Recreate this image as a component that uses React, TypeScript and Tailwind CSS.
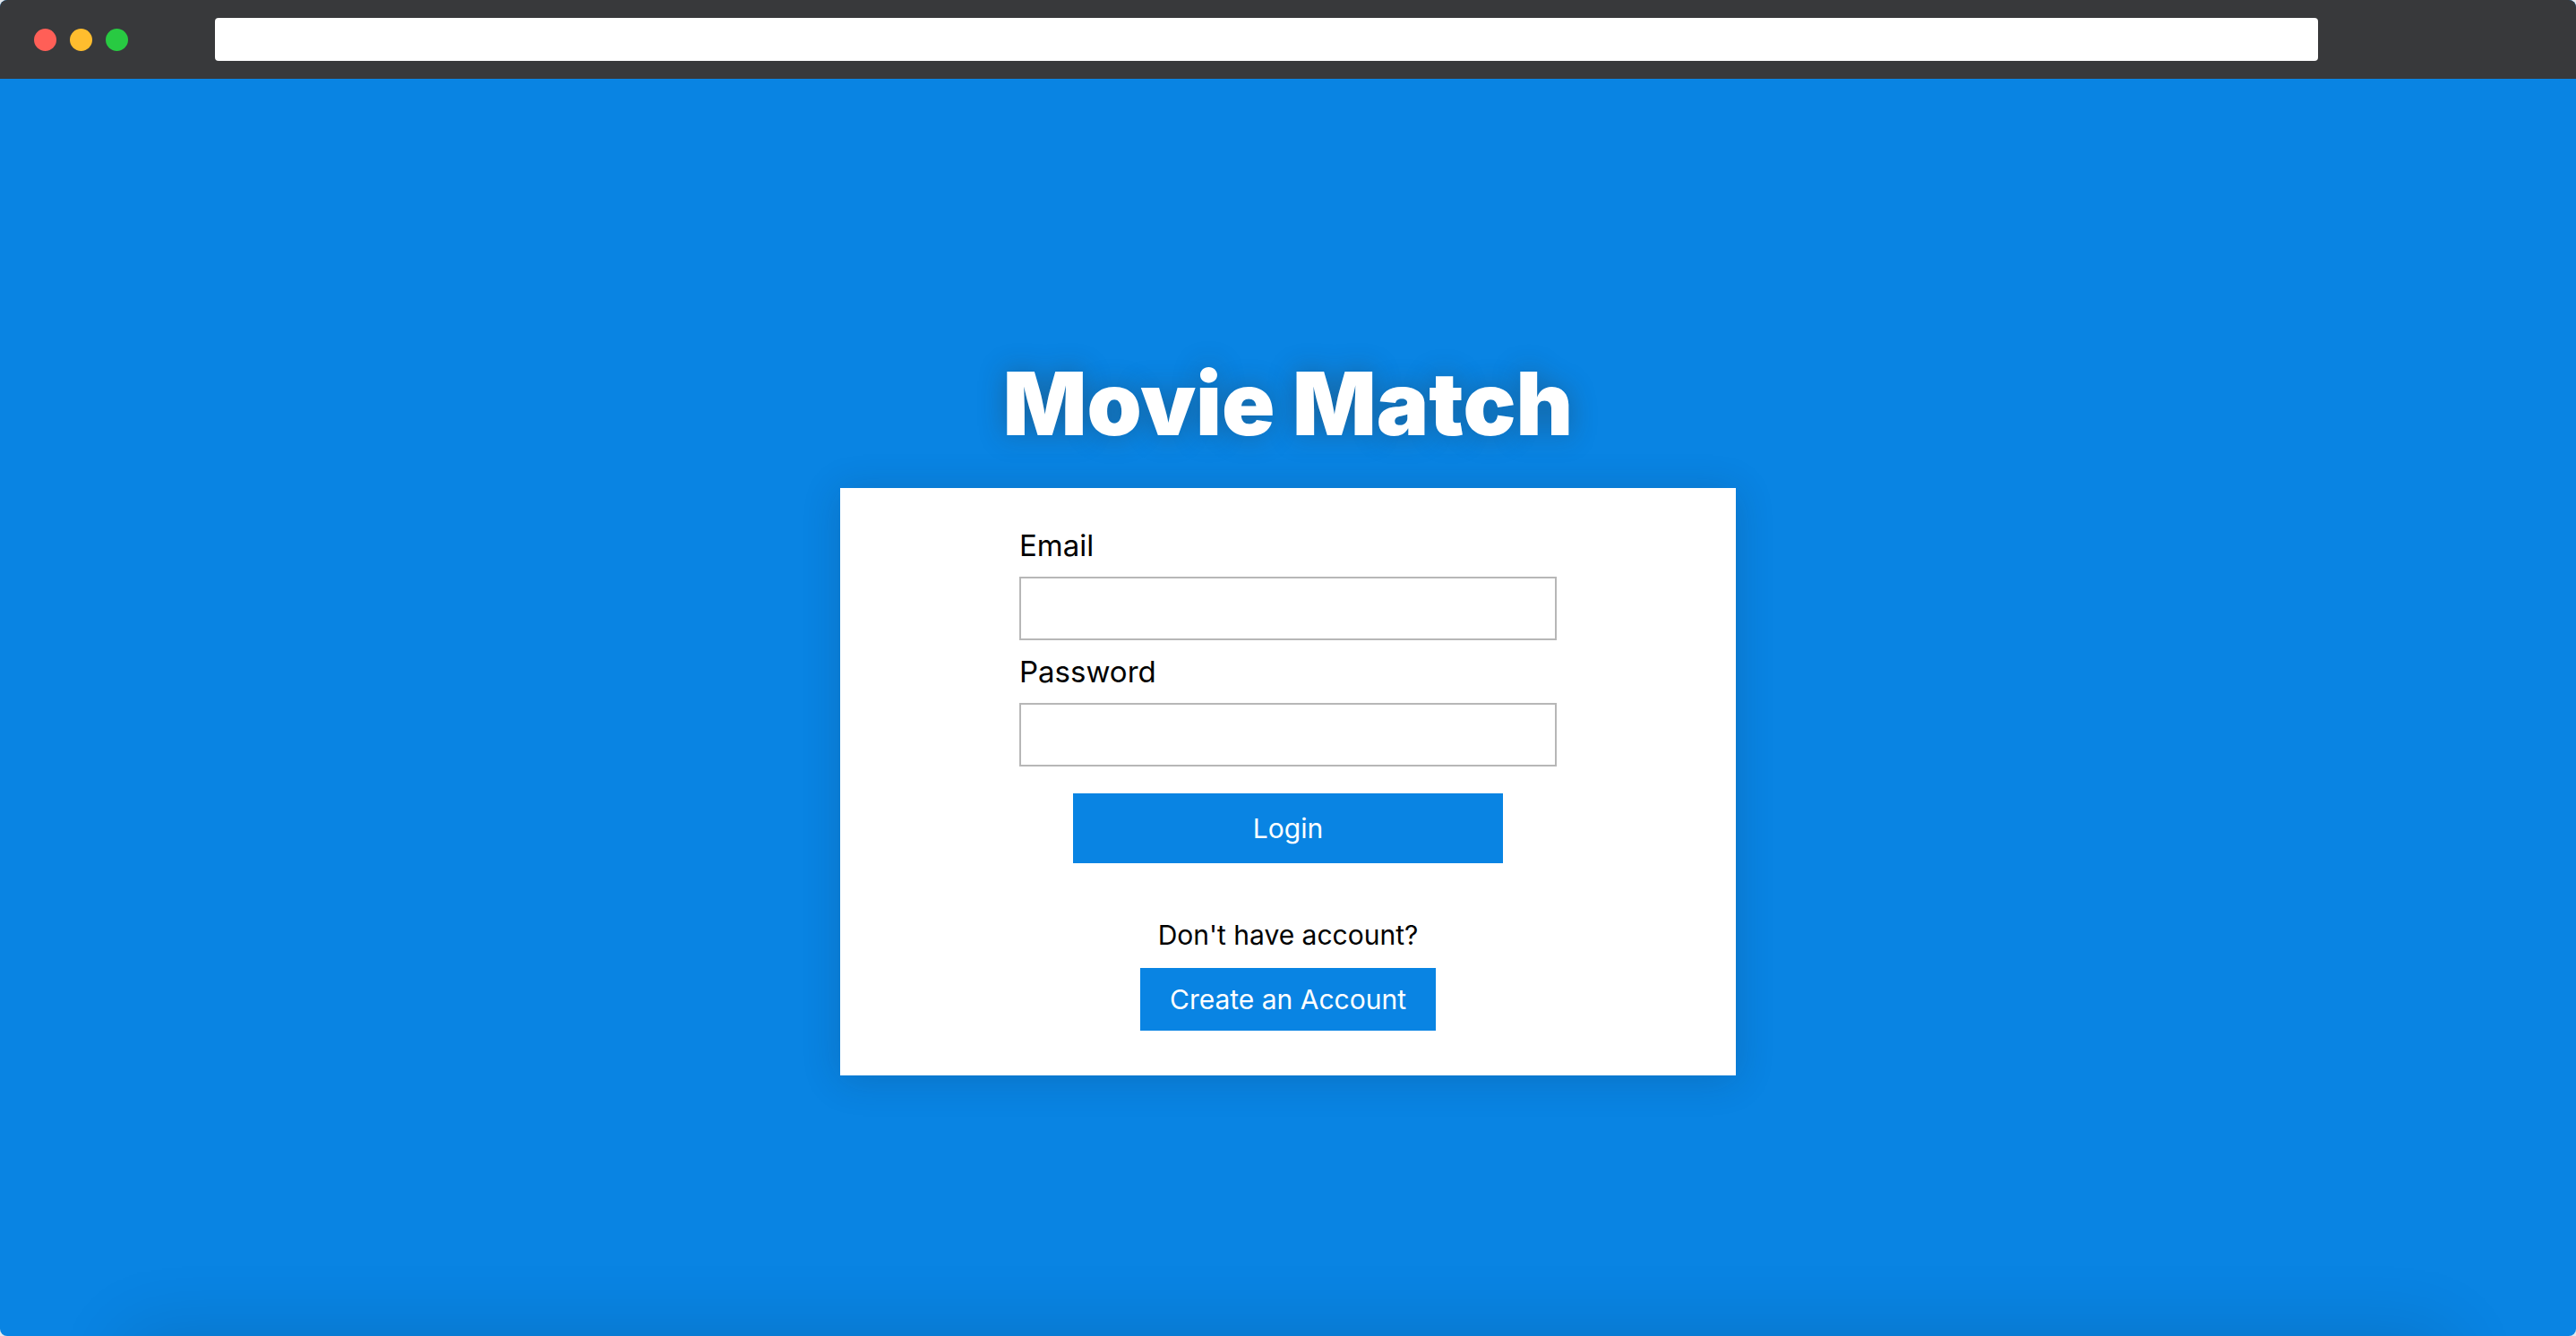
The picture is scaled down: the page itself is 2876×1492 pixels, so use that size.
type FieldProps = {
  id: string;
  label: string;
  type: string;
};

function Field({ id, label, type }: FieldProps) {
  return (
    <div className="flex w-full flex-col gap-2.5">
      <label htmlFor={id} className="text-[33px] leading-[50px] text-black">
        {label}
      </label>
      <input
        id={id}
        type={type}
        className="h-[71px] w-full border-2 border-[#b7b7b7] bg-white px-4 text-3xl outline-none"
      />
    </div>
  );
}

function BrowserBar() {
  return (
    <header className="flex h-[88px] shrink-0 items-center bg-[#38393b] pr-[10%] pl-[38px]">
      <div className="flex w-[202px] shrink-0 gap-[15px]">
        <span className="size-[25px] rounded-full bg-[#ff5f57]" />
        <span className="size-[25px] rounded-full bg-[#ffbd2e]" />
        <span className="size-[25px] rounded-full bg-[#28ca42]" />
      </div>
      <input
        type="text"
        aria-label="Address"
        className="h-12 min-w-0 flex-1 rounded bg-white px-4 text-2xl outline-none"
      />
    </header>
  );
}

function LoginCard() {
  return (
    <section className="flex w-full max-w-[1000px] flex-col items-center bg-white pt-[39px] pb-[50px] shadow-[0_4px_40px_rgba(20,40,60,0.2)]">
      <form className="flex w-3/5 flex-col items-center gap-2.5">
        <Field id="email" label="Email" type="email" />
        <Field id="password" label="Password" type="password" />
        <button
          type="button"
          className="mt-5 h-[78px] w-4/5 bg-[#0984e3] text-3xl text-white"
        >
          Login
        </button>
      </form>
      <p className="mt-[58px] text-3xl leading-[45px] text-black">
        Don't have account?
      </p>
      <button
        type="button"
        className="mt-3.5 h-[70px] w-[330px] bg-[#0984e3] text-3xl text-white"
      >
        Create an Account
      </button>
    </section>
  );
}

export default function App() {
  return (
    <div className="bg-[#e4e8ec]">
      <div className="flex h-screen flex-col overflow-hidden rounded-lg bg-[#0984e3] font-['Inter',sans-serif]">
        <BrowserBar />
        <main className="flex flex-1 shrink-0 flex-col items-center justify-center">
          <h1 className="mb-[22px] text-[98px] leading-[144px] font-black text-white [text-shadow:0_0_30px_rgba(45,52,54,0.4)]">
            Movie Match
          </h1>
          <LoginCard />
        </main>
        {/* The next panel starts below the fold; only its shadow reaches the view. */}
        <div className="mx-[5%] -mb-96 h-96 shrink-0 bg-white shadow-[0_0_80px_rgba(0,0,0,0.14)]" />
      </div>
    </div>
  );
}
